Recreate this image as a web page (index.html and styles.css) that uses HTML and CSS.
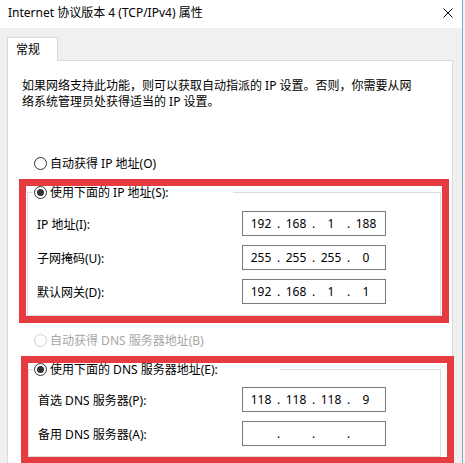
FILE: index.html
```html
<!DOCTYPE html>
<html lang="zh-CN">
<head>
<meta charset="utf-8">
<title>Internet 协议版本 4 (TCP/IPv4) 属性</title>
<link rel="stylesheet" href="styles.css">
</head>
<body>
<div class="window">
  <div class="titlebar">
    <span class="title">Internet 协议版本 4 (TCP/IPv4) 属性</span>
    <svg class="close" width="10" height="10" viewBox="0 0 10 10"><path d="M0.5 0.5 L9.5 9.5 M9.5 0.5 L0.5 9.5" stroke="#000" stroke-width="1" fill="none"/></svg>
  </div>
  <div class="content">
    <div class="tab">常规</div>
    <div class="panel">
      <p class="desc">如果网络支持此功能，则可以获取自动指派的 IP 设置。否则，你需要从网<br>络系统管理员处获得适当的 IP 设置。</p>

      <div class="radio-row"><span class="radio"></span><span>自动获得 IP 地址(O)</span></div>

      <div class="mark mark-ip">
        <fieldset class="group group-ip">
          <legend class="legend legend-ip"><span class="radio checked"></span><span>使用下面的 IP 地址(S):</span></legend>
          <div class="field"><span class="label">IP 地址(I):</span>
            <div class="ip"><span class="oct">192</span><span class="dot">.</span><span class="oct">168</span><span class="dot">.</span><span class="oct">1</span><span class="dot">.</span><span class="oct">188</span></div></div>
          <div class="field"><span class="label">子网掩码(U):</span>
            <div class="ip"><span class="oct">255</span><span class="dot">.</span><span class="oct">255</span><span class="dot">.</span><span class="oct">255</span><span class="dot">.</span><span class="oct">0</span></div></div>
          <div class="field"><span class="label">默认网关(D):</span>
            <div class="ip"><span class="oct">192</span><span class="dot">.</span><span class="oct">168</span><span class="dot">.</span><span class="oct">1</span><span class="dot">.</span><span class="oct">1</span></div></div>
        </fieldset>
      </div>

      <div class="radio-row disabled"><span class="radio"></span><span>自动获得 DNS 服务器地址(B)</span></div>

      <div class="mark mark-dns">
        <fieldset class="group group-dns">
          <legend class="legend legend-dns"><span class="radio checked"></span><span>使用下面的 DNS 服务器地址(E):</span></legend>
          <div class="field"><span class="label">首选 DNS 服务器(P):</span>
            <div class="ip"><span class="oct">118</span><span class="dot">.</span><span class="oct">118</span><span class="dot">.</span><span class="oct">118</span><span class="dot">.</span><span class="oct">9</span></div></div>
          <div class="field"><span class="label">备用 DNS 服务器(A):</span>
            <div class="ip"><span class="oct"></span><span class="dot">.</span><span class="oct"></span><span class="dot">.</span><span class="oct"></span><span class="dot">.</span><span class="oct"></span></div></div>
        </fieldset>
      </div>
    </div>
  </div>
</div>
</body>
</html>
```

FILE: styles.css
```css
html, body {
  margin: 0;
  padding: 0;
}
body {
  width: 465px;
  height: 463px;
  overflow: hidden;
  background: #f4f4f4;
  font-family: "Noto Sans", "Noto Sans CJK SC", sans-serif;
  font-size: 12px;
  color: #000;
}
.window {
  width: 462px;
  height: 463px;
  border-right: 1px solid #7ea8c6;
  background: #f0f0f0;
  display: flex;
  flex-direction: column;
}
.titlebar {
  height: 28px;
  flex: none;
  background: #fff;
  display: flex;
  align-items: center;
  padding: 0 9px 2px 8px;
  box-sizing: border-box;
}
.title {
  white-space: nowrap;
  line-height: 16px;
}
.close {
  margin-left: auto;
  display: block;
}
.content {
  flex: 1;
  padding: 9px 9px 0 7px;
  display: flex;
  flex-direction: column;
  min-height: 0;
}
.tab {
  width: 51px;
  box-sizing: border-box;
  height: 25px;
  border: 1px solid #d9d9d9;
  border-bottom: none;
  background: #fff;
  padding-left: 8px;
  line-height: 23px;
  margin-bottom: -1px;
  position: relative;
  z-index: 1;
}
.panel {
  flex: 1;
  border: 1px solid #d9d9d9;
  border-bottom: none;
  background: #fff;
  display: flex;
  flex-direction: column;
  align-items: flex-start;
}
.desc {
  margin: 17px 0 0 14px;
  line-height: 16px;
  white-space: nowrap;
}
.radio-row {
  display: flex;
  align-items: center;
  gap: 3px;
  height: 13px;
  line-height: 13px;
  margin: 47px 0 0 26px;
}
.radio {
  width: 13px;
  height: 13px;
  box-sizing: border-box;
  border: 1px solid #333;
  border-radius: 50%;
  background: #fff;
  display: inline-flex;
  align-items: center;
  justify-content: center;
  flex: none;
}
.radio.checked::after {
  content: "";
  width: 7px;
  height: 7px;
  border-radius: 50%;
  background: #333;
}
.radio-row.disabled {
  color: #a6a6a6;
  margin-top: 11px;
}
.radio-row.disabled .radio {
  border-color: #cfcfcf;
}
.mark {
  border: 7px solid #e63b40;
  box-sizing: border-box;
}
.mark-ip {
  width: 430px;
  margin: 9px 0 0 11px;
}
.mark-dns {
  width: 433px;
  margin: 9px 0 0 13px;
}
.group {
  margin: 0;
  padding: 0 0 11px 0;
  border: 1px solid #dcdcdc;
  min-width: 0;
}
.group-ip {
  margin: 0 1px 0 1px;
}
.group-dns {
  margin: 0 6px 0 0;
  padding-bottom: 10px;
}
.legend {
  display: flex;
  align-items: center;
  gap: 3px;
  height: 13px;
  line-height: 13px;
  padding: 0 0 0 1px;
  background: #fff;
  white-space: nowrap;
  box-sizing: border-box;
}
.legend-ip {
  margin-left: 5px;
  width: 200px;
}
.legend-dns {
  margin-left: 4px;
  width: 247px;
}
.field {
  display: flex;
  align-items: center;
  height: 25px;
  margin-top: 9px;
}
.group-ip .field:first-of-type {
  margin-top: 12px;
}
.group-dns .field:first-of-type {
  margin-top: 11px;
}
.group-ip .label {
  width: 214px;
  padding-left: 9px;
}
.group-dns .label {
  width: 213px;
  padding-left: 9px;
}
.label {
  box-sizing: border-box;
  white-space: nowrap;
}
.ip {
  width: 144px;
  height: 25px;
  box-sizing: border-box;
  border: 1px solid #7a7a7a;
  display: flex;
  padding-left: 4px;
  line-height: 23px;
  background: #fff;
}
.oct {
  width: 28px;
  text-align: center;
}
.dot {
  width: 7px;
  text-align: center;
}
```
